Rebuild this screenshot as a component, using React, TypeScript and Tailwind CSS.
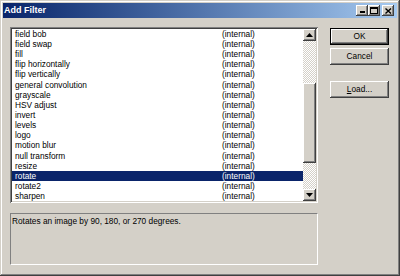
const filters = [
  'field bob',
  'field swap',
  'fill',
  'flip horizontally',
  'flip vertically',
  'general convolution',
  'grayscale',
  'HSV adjust',
  'invert',
  'levels',
  'logo',
  'motion blur',
  'null transform',
  'resize',
  'rotate',
  'rotate2',
  'sharpen',
];

const raised =
  'bg-[#d4d0c8] shadow-[inset_-1px_-1px_#404040,inset_1px_1px_#ffffff,inset_-2px_-2px_#808080,inset_2px_2px_#d4d0c8]';

function CaptionButton({ children, className = '' }: { children: React.ReactNode; className?: string }) {
  return (
    <div className={`flex h-[11px] w-[12px] items-center justify-center ${raised} ${className}`}>
      {children}
    </div>
  );
}

function ScrollArrow({ down }: { down?: boolean }) {
  return (
    <div className={`flex h-[12px] w-[13px] shrink-0 items-center justify-center ${raised}`}>
      <svg width="7" height="4" viewBox="0 0 7 4">
        {down ? <path d="M0 0h7L3.5 4z" fill="#000" /> : <path d="M0 4h7L3.5 0z" fill="#000" />}
      </svg>
    </div>
  );
}

function Button({ children, isDefault }: { children: React.ReactNode; isDefault?: boolean }) {
  return (
    <div
      className={`flex h-[17px] w-[59px] items-center justify-center text-[8.3px] text-black ${
        isDefault
          ? 'bg-[#d4d0c8] shadow-[inset_0_0_0_1px_#000000,inset_-2px_-2px_#404040,inset_2px_2px_#ffffff,inset_-3px_-3px_#808080]'
          : raised
      }`}
    >
      {children}
    </div>
  );
}

export default function App() {
  return (
    <div
      className="flex h-[276px] w-[400px] flex-col bg-[#d4d0c8] p-[3px] shadow-[inset_-1px_-1px_#404040,inset_1px_1px_#d4d0c8,inset_-2px_-2px_#808080,inset_2px_2px_#ffffff]"
      style={{ fontFamily: '"Liberation Sans", Arial, sans-serif' }}
    >
      {/* title bar */}
      <div className="flex h-[15px] shrink-0 items-center justify-between bg-linear-to-r from-[#0a246a] to-[#a6caf0] pl-[1px] pr-[3px]">
        <span className="text-[9px] font-bold text-white">Add Filter</span>
        <div className="flex items-center">
          <CaptionButton>
            <div className="mt-[3px] h-[2px] w-[5px] bg-black" />
          </CaptionButton>
          <CaptionButton>
            <div className="h-[7px] w-[8px] border border-t-2 border-black" />
          </CaptionButton>
          <CaptionButton className="ml-[2px]">
            <svg width="7" height="6" viewBox="0 0 7 6">
              <path d="M0.5 0.5L6 5.5M6 0.5L0.5 5.5" stroke="#000" strokeWidth="1.4" />
            </svg>
          </CaptionButton>
        </div>
      </div>

      <div className="flex flex-1 pl-[7px] pt-[9px]">
        {/* left column */}
        <div className="flex w-[308px] flex-col gap-[10px]">
          <div className="flex h-[176px] bg-white p-[2px] shadow-[inset_1px_1px_#808080,inset_-1px_-1px_#ffffff,inset_2px_2px_#404040,inset_-2px_-2px_#d4d0c8]">
            <div className="flex-1 overflow-hidden">
              {filters.map((name) => {
                const selected = name === 'rotate';
                return (
                  <div
                    key={name}
                    className={`flex h-[10.15px] items-center whitespace-nowrap pl-[3px] text-[8.3px] leading-none ${
                      selected ? 'bg-[#0a246a] text-white' : 'text-black'
                    }`}
                  >
                    <span className="w-[207px]">{name}</span>
                    <span>(internal)</span>
                  </div>
                );
              })}
            </div>
            <div className="flex w-[13px] flex-col bg-[repeating-conic-gradient(#d4d0c8_0_25%,#ffffff_0_50%)] bg-size-[2px_2px]">
              <ScrollArrow />
              <div className="h-[42px]" />
              <div className={`h-[80px] ${raised}`} />
              <div className="flex-1" />
              <ScrollArrow down />
            </div>
          </div>

          <div className="h-[52px] border-t border-l border-r border-b border-t-[#808080] border-l-[#808080] border-r-white border-b-white pl-[1px] pt-[1px] text-[8.3px] text-black">
            Rotates an image by 90, 180, or 270 degrees.
          </div>
        </div>

        {/* buttons */}
        <div className="ml-[12px] flex flex-col pt-[1px]">
          <Button isDefault>OK</Button>
          <div className="h-[3px]" />
          <Button>Cancel</Button>
          <div className="h-[16px]" />
          <Button>
            <span>
              <span className="underline">L</span>oad...
            </span>
          </Button>
        </div>
      </div>
    </div>
  );
}
